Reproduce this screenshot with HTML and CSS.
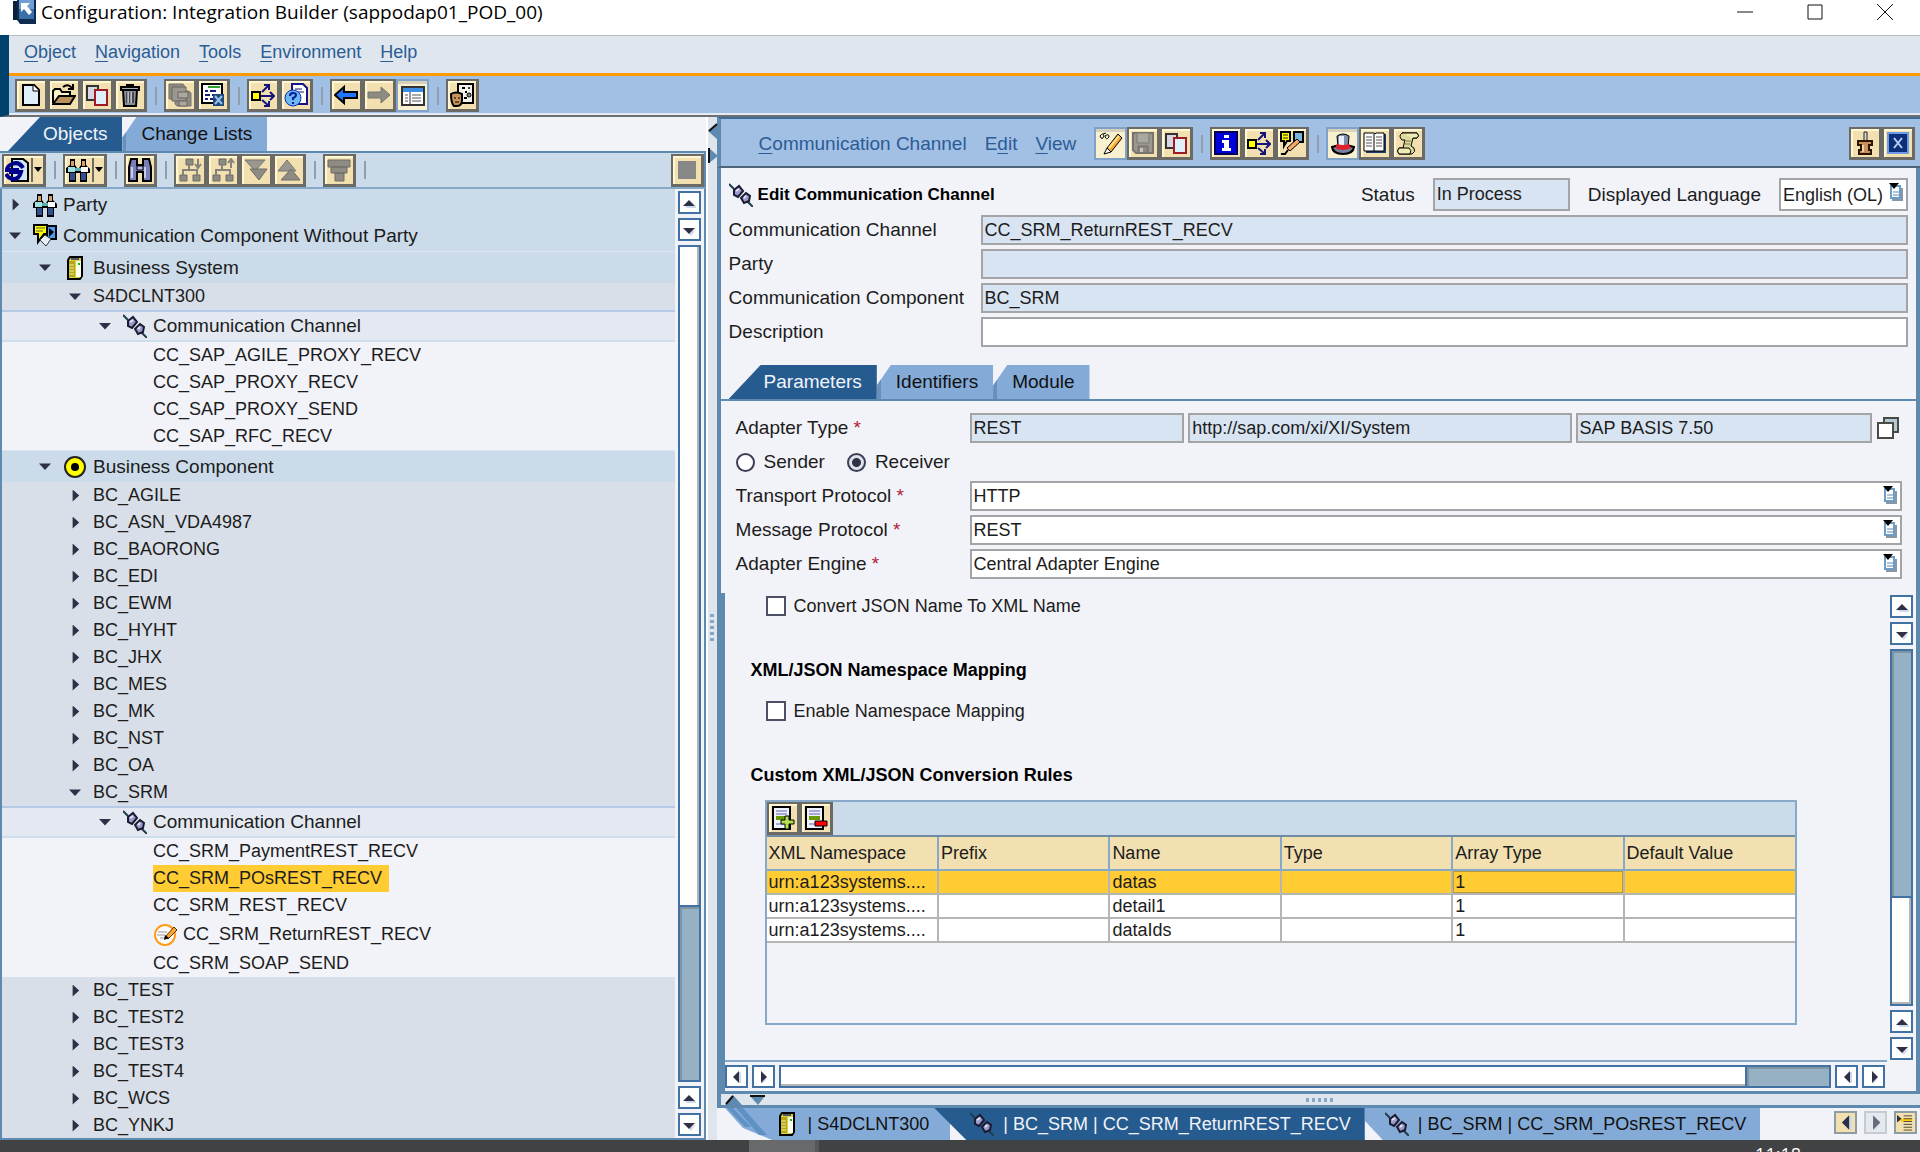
FILE: index.html
```
<!DOCTYPE html>
<html lang="en">
<head>
    <meta charset="UTF-8">
    <meta name="viewport" content="width=device-width, initial-scale=1.0">
    <title>Configuration: Integration Builder</title>
    <link rel="stylesheet" href="styles.css">
</head>
<body>
    <!-- shared icons -->
    <svg class="sprite" aria-hidden="true">
        <symbol id="i-logo" viewBox="0 0 24 24"><path d="M1 1h17v19H1z" fill="#0a2038"/><path d="M5 0h19v24H8l-3-4z" fill="#0d2c50"/><path d="M7 0h15v19H7z" fill="#6f9fd2"/><path d="M7 9h15v10H7z" fill="#3c6fa8"/><path d="M9 3h9l-3 3 5 6-3 3-5-6-3 3z" fill="#fff"/></symbol>
        <symbol id="i-new" viewBox="0 0 24 24"><path d="M4 2h11l5 5v15H4z" fill="#dff0fa" stroke="#000" stroke-width="2"/><path d="M14 2v6h6" fill="#fff" stroke="#000"/></symbol>
        <symbol id="i-open" viewBox="0 0 24 24"><path d="M1 20V8l2-2h5l2 3h8v4" fill="#fbf2c9" stroke="#000" stroke-width="2"/><path d="M1 21l6-8h16l-5 8z" fill="#b8925a" stroke="#000" stroke-width="2"/><path d="M11 4q5-4 9 1M21 1v5h-5" fill="none" stroke="#000" stroke-width="2"/></symbol>
        <symbol id="i-copy" viewBox="0 0 24 24"><path d="M2 3h11v14H2z" fill="#d8d6e2" stroke="#333" stroke-width="2"/><path d="M10 7h12v15H10z" fill="#dff0fa" stroke="#a01c24" stroke-width="2"/></symbol>
        <symbol id="i-trash" viewBox="0 0 24 24"><path d="M5 7h14l-1 16H6z" fill="#8b8f99" stroke="#000" stroke-width="2"/><path d="M3 4h18v3H3zM9 2h6v2H9z" fill="#a8acb6" stroke="#000" stroke-width="2"/><path d="M9 9v11M12 9v11M15 9v11" stroke="#000"/><path d="M10 9v11M13 9v11" stroke="#e9ebf0"/></symbol>
        <symbol id="i-saveall" viewBox="0 0 24 24"><path d="M1 1h14l2 3v12H1zM7 8h14l2 2v13H9l-2-2z" fill="#8d8b84" stroke="#77756f"/><path d="M4 4h14v14H4z" fill="#9a9890" stroke="#66645f"/><path d="M10 9h10v6H10zM11 18h8v5h-8z" fill="#aaa89f" stroke="#66645f"/></symbol>
        <symbol id="i-save" viewBox="0 0 24 24"><path d="M2 2h20v20H5l-3-3z" fill="#9a9890" stroke="#77756f" stroke-width="2"/><path d="M6 2h12v10H6z" fill="#a9a79f" stroke="#7b7972"/><path d="M7 15h10v7H7z" fill="#8a8880" stroke="#6f6d67"/><path d="M9 17h3v4H9z" fill="#c9c6b8"/></symbol>
        <symbol id="i-sheet" viewBox="0 0 24 24"><path d="M1 1h20v19H1z" fill="#fff" stroke="#000" stroke-width="2"/><path d="M7 4h12" stroke="#2fa12f" stroke-width="2"/><path d="M4 8h3M9 8h6M4 12h5M11 12h4M4 16h3M9 16h3" stroke="#1a1a80" stroke-width="2"/><path d="M12 11h11v12H12z" fill="#1c4a7c"/><path d="M14 13l7 8M21 13l-7 8" stroke="#9cc3ea" stroke-width="2"/></symbol>
        <symbol id="i-where" viewBox="0 0 24 24"><path d="M1 9h8v8H1z" fill="#ff0" stroke="#000" stroke-width="2"/><path d="M10 13h12M19 9l4 4-4 4M11 9l7-7M13 2h5v5M11 17l7 6M18 18v5h-5" fill="none" stroke="#14147a" stroke-width="2"/></symbol>
        <symbol id="i-help" viewBox="0 0 24 24"><path d="M8 1h11l4 4v16H8z" fill="#fff" stroke="#14148a" stroke-width="2"/><path d="M11 6h7M11 9h9" stroke="#14148a"/><circle cx="9" cy="15" r="8" fill="#6db8f2" stroke="#1430b4"/><path d="M6 13q0-3 3-3t3 2q0 2-3 3v2M9 19v2" fill="none" stroke="#001e9c" stroke-width="2"/></symbol>
        <symbol id="i-back" viewBox="0 0 24 24"><path d="M1 12l9-8v5h13v6H10v5z" fill="#1e78ff" stroke="#000" stroke-width="2"/></symbol>
        <symbol id="i-fwd" viewBox="0 0 24 24"><path d="M23 12l-9-8v5H1v6h13v5z" fill="#8d8b84" stroke="#77756f"/></symbol>
        <symbol id="i-layout" viewBox="0 0 24 24"><path d="M1 3h22v18H1z" fill="#fff" stroke="#333" stroke-width="2"/><path d="M2 4h20v4H2z" fill="#3a8ee6"/><path d="M9 8v13" stroke="#333"/><path d="M4 11h3M4 14h3M4 17h3M11 11h9M11 14h9M11 17h9" stroke="#555"/></symbol>
        <symbol id="i-user" viewBox="0 0 24 24"><path d="M8 1h15v19H8z" fill="#f4f2ea" stroke="#000" stroke-width="2"/><path d="M12 5h3M15 9h2M14 15h3" stroke="#000" stroke-width="2"/><circle cx="19" cy="5" r="1"/><circle cx="19" cy="12" r="2" fill="#888" stroke="#000"/><path d="M1 11q5-3 11 0v6q0 6-5 6H4q-3-3-3-12z" fill="#c7955c" stroke="#000" stroke-width="2"/><path d="M5 14v2M9 14v2M5 19h4" stroke="#000"/></symbol>
        <symbol id="i-refresh" viewBox="0 0 24 24"><path d="M7 1h11l5 4v18H7z" fill="#cfe6f6" stroke="#000" stroke-width="2"/><path d="M18 10Q14 3 7 6 2 8 2 12h12M4 14h12q-2 8-9 7-4-1-6-5" fill="none" stroke="#00008b" stroke-width="4"/></symbol>
        <symbol id="i-party" viewBox="0 0 24 24"><path d="M4 1h5v6l2 3h2l2-3V1h5v6l4 4v4h-3v9h-7v-9h-4v9H3v-9H0v-5l4-3z" fill="#000"/><path d="M5 3h3v5H5zM16 3h3v5h-3z" fill="#d9a066"/><path d="M2 9h7v5H2z" fill="#9fe2e2"/><path d="M15 9h7v5h-7z" fill="#fff"/><path d="M9 10h6v3H9z" fill="#5fb0b0"/><path d="M4 15h5v7H4zM15 15h5v7h-5z" fill="#32508c"/></symbol>
        <symbol id="i-find" viewBox="0 0 24 24"><path d="M3 1h6v6h6V1h6l2 8v14h-8v-9H9v9H1V9z" fill="#7b7fb8" stroke="#000" stroke-width="2"/><path d="M9 8h6v4H9z" fill="#b9bce6" stroke="#000"/><path d="M4 9v11M17 9v11" stroke="#c8caf0" stroke-width="2"/></symbol>
        <symbol id="i-treedown" viewBox="0 0 24 24"><path d="M8 1h7v6H8zM2 17h7v6H2zM15 17h7v6h-7z" fill="#8d8b84" stroke="#6f6d67"/><path d="M11 7v5M5 17v-5h14v5M20 1v8M17 6l3 4 3-4" fill="none" stroke="#85837c" stroke-width="2"/></symbol>
        <symbol id="i-treeup" viewBox="0 0 24 24"><path d="M8 1h7v6H8zM2 17h7v6H2zM15 17h7v6h-7z" fill="#8d8b84" stroke="#6f6d67"/><path d="M11 7v5M5 17v-5h14v5M20 10V2M17 5l3-4 3 4" fill="none" stroke="#85837c" stroke-width="2"/></symbol>
        <symbol id="i-alldown" viewBox="0 0 24 24"><path d="M1 2h20L11 13z" fill="#99978f" stroke="#77756f"/><path d="M6 11h17l-8 11z" fill="#8d8b84" stroke="#6f6d67"/></symbol>
        <symbol id="i-allup" viewBox="0 0 24 24"><path d="M1 13h18L10 2z" fill="#99978f" stroke="#77756f"/><path d="M4 22h19L14 11z" fill="#8d8b84" stroke="#6f6d67"/></symbol>
        <symbol id="i-filter" viewBox="0 0 24 24"><path d="M1 2h22v7H1zM4 9h16v6H4zM8 15h9v8H8z" fill="#8d8b84" stroke="#6f6d67"/></symbol>
        <symbol id="i-stop" viewBox="0 0 24 24"><path d="M3 3h18v18H3z" fill="#878787"/></symbol>
        <symbol id="i-comm" viewBox="0 0 24 24"><path d="M14 2h9v13h-9z" fill="#4c9cf0" stroke="#000" stroke-width="2"/><path d="M16 4l5 4-5 5z"/><path d="M1 1h13v9h-3l-6 8v-8H1z" fill="#ff0" stroke="#000" stroke-width="2"/><path d="M3 4h9M3 7h7" stroke="#555"/><path d="M7 16l5-5 6 4-5 7z" fill="#e6eef8" stroke="#333"/></symbol>
        <symbol id="i-server" viewBox="0 0 24 24"><path d="M5 4l2-3h12v19l-2 3H5z" fill="#d8cf4a" stroke="#000" stroke-width="2"/><path d="M13 5h5v16h-5z" fill="#fffff0"/><path d="M6 5h6v16H6z" fill="#b4a818"/><path d="M6 9h5M6 12h5M6 15h5M6 18h5" stroke="#f4ee90"/><path d="M8 3h8" stroke="#555" stroke-width="2"/><path d="M15 8h2" stroke="#0c0" stroke-width="2"/></symbol>
        <symbol id="i-channel" viewBox="0 0 24 24"><path d="M0 1l5 5M18 18l6 6" stroke="#1d3e4e" stroke-width="2"/><path d="M5 7l5-4 4 5-5 6-4-2z" fill="#9c9ccc" stroke="#1a1a30" stroke-width="2"/><path d="M12 15l5-5 4 3-1 5-5 2z" fill="#9c9ccc" stroke="#1a1a30" stroke-width="2"/><path d="M7 8l3-2M15 15l2-2" stroke="#e4e4fa" stroke-width="2"/></symbol>
        <symbol id="i-component" viewBox="0 0 24 24"><circle cx="12" cy="12" r="10" fill="#ff0" stroke="#222" stroke-width="2"/><circle cx="12" cy="12" r="4"/></symbol>
        <symbol id="i-edit" viewBox="0 0 24 24"><circle cx="12" cy="12" r="10" fill="#fff" stroke="#ff9b1a" stroke-width="2"/><path d="M5 9h9M4 12h8M7 15h6" stroke="#999"/><path d="M12 14l9-10 3 3-9 9z" fill="#f7a833" stroke="#5a3200"/><path d="M11 17l1-5 4 3z"/></symbol>
        <symbol id="i-toggle" viewBox="0 0 24 24"><path d="M1 4q3-4 4 0-2 5-4 0M6 4q4-3 4 1-3 4-4-1M4 2l3-1" fill="none" stroke="#000"/><path d="M8 16L19 2l4 4L12 20z" fill="#f7a833" stroke="#000"/><path d="M10 16l10-12" stroke="#ffe08a" stroke-width="2"/><path d="M5 22l3-6 4 4z" fill="#fff" stroke="#000"/></symbol>
        <symbol id="i-info" viewBox="0 0 24 24"><path d="M1 1h22v22H1z" fill="#0000d8" stroke="#00005a" stroke-width="2"/><path d="M10 4h5v3h-5zM8 9h7v8h2v3H8v-3h2v-5H8z" fill="#fff"/></symbol>
        <symbol id="i-change" viewBox="0 0 24 24"><path d="M14 1h9v10h-9z" fill="#7ab4d8" stroke="#000" stroke-width="2"/><path d="M1 1h9v9H7l-3 5v-5H1z" fill="#ff0" stroke="#000" stroke-width="2"/><path d="M3 4h5M3 7h5" stroke="#222"/><path d="M7 17l10-9 3 3-10 9z" fill="#f7a868" stroke="#000"/><path d="M1 23h4l3-4" fill="none" stroke="#000" stroke-width="2"/></symbol>
        <symbol id="i-hat" viewBox="0 0 24 24"><path d="M1 15q11-4 22 0-1 7-11 7T1 15z" fill="#7782a2" stroke="#000" stroke-width="2"/><path d="M6 4q6-4 12 0l-1 11H7z" fill="#7f8dae" stroke="#000"/><path d="M8 4h5v9H8z" fill="#e9effa"/><path d="M6 12q6 2 12 0l2 4q-8 4-16 0z" fill="#e0202c"/></symbol>
        <symbol id="i-book" viewBox="0 0 24 24"><path d="M3 3h20v19H3z" fill="#1e3c68"/><path d="M1 2h10l1 1 1-1h8v18H1z" fill="#fff" stroke="#000"/><path d="M11 3v17" stroke="#000"/><path d="M3 6h6M3 9h6M3 12h6M3 15h6M13 6h6M13 9h6M13 12h6M13 15h6" stroke="#555"/></symbol>
        <symbol id="i-scroll" viewBox="0 0 24 24"><path d="M6 2h15q3 3 0 5h-4l-2 8 3 2q2 4-2 6H3q-3-3 0-6h4l2-8H6q-4-4 0-7z" fill="#dedc9c" stroke="#000"/><path d="M6 2h15q3 3 0 5h-4M3 17h10q3 2 1 6H3q-3-3 0-6z" fill="#efedb4" stroke="#000"/><path d="M10 10h5M9 13h5" stroke="#77753a"/></symbol>
        <symbol id="i-pin" viewBox="0 0 24 24"><path d="M11 1h3v9h-3z" fill="#ddd" stroke="#222"/><path d="M5 10h14v4h-3v5h2v4H6v-4h2v-5H5z" fill="#c98f5c" stroke="#2c1500" stroke-width="2"/><path d="M10 14v7" stroke="#f3d0a6" stroke-width="2"/></symbol>
        <symbol id="i-close" viewBox="0 0 24 24"><path d="M1 1h22v22H1z" fill="#6f9ae6"/><path d="M3 3h18v18H3z" fill="#0b2f78"/><path d="M8 7l8 10M16 7L8 17" stroke="#b8cdf4" stroke-width="2"/></symbol>
        <symbol id="i-rowadd" viewBox="0 0 24 24"><path d="M2 1h17v22H2z" fill="#f0f2fb" stroke="#000" stroke-width="2"/><path d="M5 5h11M5 8h11M5 18h8" stroke="#a6a9dc" stroke-width="2"/><path d="M5 10h11v4H5z" fill="#6a9a00"/><path d="M14 10h4v4h5v4h-5v5h-4v-5h-4v-4h4z" fill="#b6dc50" stroke="#000"/></symbol>
        <symbol id="i-rowdel" viewBox="0 0 24 24"><path d="M2 1h17v22H2z" fill="#f0f2fb" stroke="#000" stroke-width="2"/><path d="M5 5h11M5 8h11M5 18h8" stroke="#a6a9dc" stroke-width="2"/><path d="M5 10h11v4H5z" fill="#6a9a00"/><path d="M11 15h12v5H11z" fill="#f00" stroke="#000"/></symbol>
        <symbol id="i-list" viewBox="0 0 14 18"><path d="M2 3h9v12H2z" fill="#fff" stroke="#6f9cc4" stroke-width="2"/><path d="M13 5v12H3" fill="none" stroke="#8797a6" stroke-width="2"/><path d="M4 9h6M4 12h6" stroke="#5b8ab4"/><path d="M0 0h10L5 6z"/></symbol>
        <symbol id="i-windows" viewBox="0 0 24 24"><path d="M8 2h14v14H8z" fill="#b4cad6" stroke="#4a4a44" stroke-width="2"/><path d="M2 7h15v15H2z" fill="#fff" stroke="#4a4a44" stroke-width="2"/></symbol>
        <symbol id="i-up" viewBox="0 0 14 14"><path d="M3 10h11v2H5z" fill="#c9d9ee"/><path d="M1 10l6-6 6 6z" fill="#2e3048"/></symbol>
        <symbol id="i-down" viewBox="0 0 14 14"><path d="M14 6l-5 7-2-2z" fill="#c9d9ee"/><path d="M1 5h12l-6 6z" fill="#2e3048"/></symbol>
        <symbol id="i-left" viewBox="0 0 14 14"><path d="M10 2h2v11h-2z" fill="#c9d9ee"/><path d="M10 1v12L4 7z" fill="#2e3048"/></symbol>
        <symbol id="i-right" viewBox="0 0 14 14"><path d="M12 8l-6 6v-2z" fill="#c9d9ee"/><path d="M5 1v12l6-6z" fill="#2e3048"/></symbol>
        <symbol id="i-tablist" viewBox="0 0 18 18"><path d="M0 1v8l5-4z" fill="#2e3048"/><path d="M4 5h12v3H4z" fill="#ffcc00"/><path d="M7 2h9M7 5h9M7 8h9M7 11h9M7 14h9M7 17h9" stroke="#4a4434"/></symbol>
    </svg>

    <div class="window">
        <header class="titlebar">
            <svg class="logo"><use href="#i-logo"/></svg>
            <h1>Configuration: Integration Builder (sappodap01_POD_00)</h1>
            <div class="window-buttons">
                <button aria-label="Minimize"><svg viewBox="0 0 18 18"><path d="M1 9h16"/></svg></button>
                <button aria-label="Maximize"><svg viewBox="0 0 18 18"><path d="M2 2h14v14H2z"/></svg></button>
                <button aria-label="Close"><svg viewBox="0 0 18 18"><path d="M1 1l16 16M17 1L1 17"/></svg></button>
            </div>
        </header>

        <div class="topbars">
            <nav class="menubar">
                <a href="#"><u>O</u>bject</a>
                <a href="#"><u>N</u>avigation</a>
                <a href="#"><u>T</u>ools</a>
                <a href="#"><u>E</u>nvironment</a>
                <a href="#"><u>H</u>elp</a>
            </nav>
            <div class="toolbar main-toolbar">
                <div class="group">
                    <button class="tool" aria-label="New"><svg><use href="#i-new"/></svg></button>
                    <button class="tool" aria-label="Open"><svg><use href="#i-open"/></svg></button>
                    <button class="tool" aria-label="Copy"><svg><use href="#i-copy"/></svg></button>
                    <button class="tool" aria-label="Delete"><svg><use href="#i-trash"/></svg></button>
                </div>
                <i class="sep"></i>
                <div class="group">
                    <button class="tool" aria-label="Save all"><svg><use href="#i-saveall"/></svg></button>
                    <button class="tool" aria-label="Close all"><svg><use href="#i-sheet"/></svg></button>
                </div>
                <i class="sep"></i>
                <div class="group">
                    <button class="tool" aria-label="Where used"><svg><use href="#i-where"/></svg></button>
                    <button class="tool" aria-label="Help"><svg><use href="#i-help"/></svg></button>
                </div>
                <i class="sep"></i>
                <div class="group">
                    <button class="tool" aria-label="Back"><svg><use href="#i-back"/></svg></button>
                    <button class="tool" aria-label="Forward"><svg><use href="#i-fwd"/></svg></button>
                    <button class="tool pressed" aria-label="Navigation area"><svg><use href="#i-layout"/></svg></button>
                </div>
                <i class="sep"></i>
                <div class="group">
                    <button class="tool" aria-label="User roles"><svg><use href="#i-user"/></svg></button>
                </div>
            </div>
        </div>

        <main class="workspace">
            <section class="navigator">
                <div class="tabs nav-tabs">
                    <button class="tab active">Objects</button>
                    <button class="tab">Change Lists</button>
                </div>
                <div class="toolbar nav-toolbar">
                    <div class="group">
                        <button class="tool wide" aria-label="Refresh"><svg><use href="#i-refresh"/></svg><b class="caret"></b></button>
                    </div>
                    <i class="sep"></i>
                    <div class="group">
                        <button class="tool wide" aria-label="Party"><svg><use href="#i-party"/></svg><b class="caret"></b></button>
                    </div>
                    <i class="sep"></i>
                    <div class="group">
                        <button class="tool" aria-label="Find"><svg><use href="#i-find"/></svg></button>
                    </div>
                    <i class="sep"></i>
                    <div class="group">
                        <button class="tool" aria-label="Expand node"><svg><use href="#i-treedown"/></svg></button>
                        <button class="tool" aria-label="Collapse node"><svg><use href="#i-treeup"/></svg></button>
                        <button class="tool" aria-label="Expand all"><svg><use href="#i-alldown"/></svg></button>
                        <button class="tool" aria-label="Collapse all"><svg><use href="#i-allup"/></svg></button>
                    </div>
                    <i class="sep"></i>
                    <div class="group">
                        <button class="tool" aria-label="Filter"><svg><use href="#i-filter"/></svg></button>
                    </div>
                    <i class="sep"></i>
                    <button class="tool push" aria-label="Stop"><svg><use href="#i-stop"/></svg></button>
                </div>
                <div class="tree-area">
                    <ul class="tree">
                        <li class="l0 has-icon"><button class="closed" aria-label="Expand"></button><svg><use href="#i-party"/></svg><span>Party</span></li>
                        <li class="l0 has-icon"><button class="opened" aria-label="Collapse"></button><svg><use href="#i-comm"/></svg><span>Communication Component Without Party</span></li>
                        <li class="l1 has-icon"><button class="opened" aria-label="Collapse"></button><svg><use href="#i-server"/></svg><span>Business System</span></li>
                        <li class="l2"><button class="opened" aria-label="Collapse"></button><span>S4DCLNT300</span></li>
                        <li class="l3 has-icon"><button class="opened" aria-label="Collapse"></button><svg><use href="#i-channel"/></svg><span>Communication Channel</span></li>
                        <li class="l4"><span>CC_SAP_AGILE_PROXY_RECV</span></li>
                        <li class="l4"><span>CC_SAP_PROXY_RECV</span></li>
                        <li class="l4"><span>CC_SAP_PROXY_SEND</span></li>
                        <li class="l4"><span>CC_SAP_RFC_RECV</span></li>
                        <li class="l1 has-icon"><button class="opened" aria-label="Collapse"></button><svg><use href="#i-component"/></svg><span>Business Component</span></li>
                        <li class="l2"><button class="closed" aria-label="Expand"></button><span>BC_AGILE</span></li>
                        <li class="l2"><button class="closed" aria-label="Expand"></button><span>BC_ASN_VDA4987</span></li>
                        <li class="l2"><button class="closed" aria-label="Expand"></button><span>BC_BAORONG</span></li>
                        <li class="l2"><button class="closed" aria-label="Expand"></button><span>BC_EDI</span></li>
                        <li class="l2"><button class="closed" aria-label="Expand"></button><span>BC_EWM</span></li>
                        <li class="l2"><button class="closed" aria-label="Expand"></button><span>BC_HYHT</span></li>
                        <li class="l2"><button class="closed" aria-label="Expand"></button><span>BC_JHX</span></li>
                        <li class="l2"><button class="closed" aria-label="Expand"></button><span>BC_MES</span></li>
                        <li class="l2"><button class="closed" aria-label="Expand"></button><span>BC_MK</span></li>
                        <li class="l2"><button class="closed" aria-label="Expand"></button><span>BC_NST</span></li>
                        <li class="l2"><button class="closed" aria-label="Expand"></button><span>BC_OA</span></li>
                        <li class="l2"><button class="opened" aria-label="Collapse"></button><span>BC_SRM</span></li>
                        <li class="l3 has-icon"><button class="opened" aria-label="Collapse"></button><svg><use href="#i-channel"/></svg><span>Communication Channel</span></li>
                        <li class="l4"><span>CC_SRM_PaymentREST_RECV</span></li>
                        <li class="l4"><span class="selected">CC_SRM_POsREST_RECV</span></li>
                        <li class="l4"><span>CC_SRM_REST_RECV</span></li>
                        <li class="l4 editing"><svg><use href="#i-edit"/></svg><span>CC_SRM_ReturnREST_RECV</span></li>
                        <li class="l4"><span>CC_SRM_SOAP_SEND</span></li>
                        <li class="l2"><button class="closed" aria-label="Expand"></button><span>BC_TEST</span></li>
                        <li class="l2"><button class="closed" aria-label="Expand"></button><span>BC_TEST2</span></li>
                        <li class="l2"><button class="closed" aria-label="Expand"></button><span>BC_TEST3</span></li>
                        <li class="l2"><button class="closed" aria-label="Expand"></button><span>BC_TEST4</span></li>
                        <li class="l2"><button class="closed" aria-label="Expand"></button><span>BC_WCS</span></li>
                        <li class="l2"><button class="closed" aria-label="Expand"></button><span>BC_YNKJ</span></li>
                    </ul>
                    <div class="scroll vertical">
                        <button aria-label="Up"><svg><use href="#i-up"/></svg></button>
                        <button aria-label="Down"><svg><use href="#i-down"/></svg></button>
                        <div class="track at-end"><div class="thumb tree-thumb"></div></div>
                        <button aria-label="Up"><svg><use href="#i-up"/></svg></button>
                        <button aria-label="Down"><svg><use href="#i-down"/></svg></button>
                    </div>
                </div>
            </section>

            <div class="splitter">
                <svg class="split-arrows" viewBox="0 0 11 42"><path d="M11 0v17L1 8z" fill="#5f8ab0"/><path d="M10 1L2 8" stroke="#111" stroke-width="2"/><path d="M2 25v15l9-7z" fill="#5f8ab0"/><path d="M2 25v15" stroke="#111" stroke-width="2"/></svg>
                <div class="grip"></div>
            </div>

            <section class="editor">
                <div class="toolbar editor-bar">
                    <nav class="editor-menu">
                        <a href="#"><u>C</u>ommunication Channel</a>
                        <a href="#">E<u>d</u>it</a>
                        <a href="#"><u>V</u>iew</a>
                    </nav>
                    <div class="group">
                        <button class="tool pressed" aria-label="Display or edit"><svg><use href="#i-toggle"/></svg></button>
                        <button class="tool" aria-label="Save"><svg><use href="#i-save"/></svg></button>
                        <button class="tool" aria-label="Copy"><svg><use href="#i-copy"/></svg></button>
                    </div>
                    <i class="sep"></i>
                    <div class="group">
                        <button class="tool" aria-label="Information"><svg><use href="#i-info"/></svg></button>
                        <button class="tool" aria-label="Where used"><svg><use href="#i-where"/></svg></button>
                        <button class="tool" aria-label="Change"><svg><use href="#i-change"/></svg></button>
                    </div>
                    <i class="sep"></i>
                    <div class="group">
                        <button class="tool pressed" aria-label="Header"><svg><use href="#i-hat"/></svg></button>
                        <button class="tool" aria-label="Documentation"><svg><use href="#i-book"/></svg></button>
                        <button class="tool" aria-label="History"><svg><use href="#i-scroll"/></svg></button>
                    </div>
                    <div class="group push">
                        <button class="tool" aria-label="Detach"><svg><use href="#i-pin"/></svg></button>
                        <button class="tool" aria-label="Close"><svg><use href="#i-close"/></svg></button>
                    </div>
                </div>

                <div class="editor-body">
                    <div class="object-head">
                        <div class="title-row">
                            <svg class="title-icon"><use href="#i-channel"/></svg>
                            <h2>Edit Communication Channel</h2>
                            <label for="status">Status</label>
                            <input id="status" class="status" value="In Process" readonly>
                            <label for="language">Displayed Language</label>
                            <div class="combo language">
                                <select id="language"><option>English (OL)</option></select>
                                <svg><use href="#i-list"/></svg>
                            </div>
                        </div>
                        <div class="head-field"><label for="channel">Communication Channel</label><input id="channel" value="CC_SRM_ReturnREST_RECV" readonly></div>
                        <div class="head-field"><label for="party">Party</label><input id="party" readonly></div>
                        <div class="head-field"><label for="component">Communication Component</label><input id="component" value="BC_SRM" readonly></div>
                        <div class="head-field"><label for="description">Description</label><input id="description"></div>
                    </div>

                    <div class="tabs editor-tabs">
                        <button class="tab active">Parameters</button>
                        <button class="tab">Identifiers</button>
                        <button class="tab">Module</button>
                    </div>

                    <div class="parameters">
                        <div class="param">
                            <label for="adapter">Adapter Type <em>*</em></label>
                            <div class="adapter">
                                <input id="adapter" value="REST" readonly>
                                <input aria-label="Adapter namespace" value="http://sap.com/xi/XI/System" readonly>
                                <input aria-label="Software component" value="SAP BASIS 7.50" readonly>
                                <button class="pick" aria-label="Select adapter"><svg><use href="#i-windows"/></svg></button>
                            </div>
                        </div>
                        <div class="direction">
                            <label><input type="radio" name="direction">Sender</label>
                            <label><input type="radio" name="direction" checked>Receiver</label>
                        </div>
                        <div class="param">
                            <label for="transport">Transport Protocol <em>*</em></label>
                            <div class="combo"><select id="transport"><option>HTTP</option></select><svg><use href="#i-list"/></svg></div>
                        </div>
                        <div class="param">
                            <label for="message">Message Protocol <em>*</em></label>
                            <div class="combo"><select id="message"><option>REST</option></select><svg><use href="#i-list"/></svg></div>
                        </div>
                        <div class="param">
                            <label for="engine">Adapter Engine <em>*</em></label>
                            <div class="combo"><select id="engine"><option>Central Adapter Engine</option></select><svg><use href="#i-list"/></svg></div>
                        </div>
                    </div>

                    <div class="details">
                        <div class="details-row">
                            <div class="details-content">
                                <label class="check"><input type="checkbox">Convert JSON Name To XML Name</label>
                                <h3>XML/JSON Namespace Mapping</h3>
                                <label class="check"><input type="checkbox">Enable Namespace Mapping</label>
                                <h3>Custom XML/JSON Conversion Rules</h3>
                                <div class="rules">
                                    <div class="rules-bar">
                                        <button class="tool" aria-label="Add row"><svg><use href="#i-rowadd"/></svg></button>
                                        <button class="tool" aria-label="Delete row"><svg><use href="#i-rowdel"/></svg></button>
                                    </div>
                                    <table>
                                        <thead>
                                            <tr><th>XML Namespace</th><th>Prefix</th><th>Name</th><th>Type</th><th>Array Type</th><th>Default Value</th></tr>
                                        </thead>
                                        <tbody>
                                            <tr class="current"><td>urn:a123systems....</td><td></td><td>datas</td><td></td><td class="focus">1</td><td></td></tr>
                                            <tr><td>urn:a123systems....</td><td></td><td>detail1</td><td></td><td>1</td><td></td></tr>
                                            <tr><td>urn:a123systems....</td><td></td><td>dataIds</td><td></td><td>1</td><td></td></tr>
                                        </tbody>
                                    </table>
                                </div>
                            </div>
                            <div class="scroll vertical">
                                <button aria-label="Up"><svg><use href="#i-up"/></svg></button>
                                <button aria-label="Down"><svg><use href="#i-down"/></svg></button>
                                <div class="track"><div class="thumb details-thumb"></div></div>
                                <button aria-label="Up"><svg><use href="#i-up"/></svg></button>
                                <button aria-label="Down"><svg><use href="#i-down"/></svg></button>
                            </div>
                        </div>
                        <div class="scroll horizontal">
                            <button aria-label="Left"><svg><use href="#i-left"/></svg></button>
                            <button aria-label="Right"><svg><use href="#i-right"/></svg></button>
                            <div class="track at-end"><div class="thumb across-thumb"></div></div>
                            <button aria-label="Left"><svg><use href="#i-left"/></svg></button>
                            <button aria-label="Right"><svg><use href="#i-right"/></svg></button>
                        </div>
                    </div>
                </div>

                <div class="splitter-bottom">
                    <svg viewBox="0 0 42 11"><path d="M0 11L8 1l9 10z" fill="#5f8ab0"/><path d="M1 10l7-8" stroke="#111" stroke-width="2"/><path d="M25 2h15l-7 9z" fill="#5f8ab0"/><path d="M25 2h15" stroke="#111" stroke-width="2"/></svg>
                    <div class="grip across"></div>
                </div>

                <div class="open-objects">
                    <svg class="folds" viewBox="0 0 50 32"><path d="M2 0h48v32h-1L20 20z" fill="#84abd8"/><path d="M4 0h6l18 19h-6zM13 0h7l24 27h-8z" fill="#5f92c4"/></svg>
                    <button class="object-tab first"><svg><use href="#i-server"/></svg>| S4DCLNT300</button>
                    <button class="object-tab active"><svg><use href="#i-channel"/></svg>| BC_SRM | CC_SRM_ReturnREST_RECV</button>
                    <button class="object-tab"><svg><use href="#i-channel"/></svg>| BC_SRM | CC_SRM_POsREST_RECV</button>
                    <div class="tab-nav">
                        <button aria-label="Previous tab"><svg><use href="#i-left"/></svg></button>
                        <button aria-label="Next tab" disabled><svg><use href="#i-right"/></svg></button>
                        <button aria-label="All tabs"><svg><use href="#i-tablist"/></svg></button>
                    </div>
                </div>
            </section>
        </main>

        <footer class="taskbar">
            <div class="task"></div>
            <time>11:18</time>
        </footer>
    </div>
</body>
</html>
```
FILE: styles.css
```
* {
    margin: 0;
    padding: 0;
    box-sizing: border-box;
}
body {
    font-family: "Liberation Sans", Arial, sans-serif;
    font-size: 19px;
    color: #1c1c1c;
    background: #f2f3f8;
}
button, input, select {
    font: inherit;
    color: inherit;
    border: none;
    border-radius: 0;
    background: none;
}
svg {
    display: block;
    flex: none;
    width: 24px;
    height: 24px;
}
.sprite {
    display: none;
}
.window {
    height: 100vh;
    display: flex;
    flex-direction: column;
    overflow: hidden;
}

/* title bar */
.titlebar {
    height: 35px;
    flex: none;
    display: flex;
    align-items: flex-start;
    background: #fff;
    padding-left: 12px;
}
.logo {
    margin-right: 5px;
}
.titlebar h1 {
    font: 19px/24px "Open Sans", sans-serif;
    color: #000;
}
.window-buttons {
    display: flex;
    margin-left: auto;
}
.window-buttons button {
    width: 70px;
    height: 24px;
    display: grid;
    place-items: center;
}
.window-buttons svg {
    width: 18px;
    height: 18px;
    fill: none;
    stroke: #111;
}

/* menu and toolbars */
.topbars {
    flex: none;
    border-left: 9px solid #00426b;
    border-bottom: 2px solid #6d6f72;
}
.menubar {
    height: 38px;
    display: flex;
    align-items: center;
    gap: 19px;
    padding: 0 0 4px 15px;
    font-size: 18px;
    background: #dfe6ed;
    border-top: 1px solid #b9bec4;
}
.menubar a, .editor-menu a {
    color: #2a5c96;
    text-decoration: none;
}
.menubar u, .editor-menu u {
    text-underline-offset: 3px;
}
.toolbar {
    display: flex;
    align-items: center;
}
.main-toolbar {
    height: 42px;
    padding: 2px 0 0 6px;
    background: #a2bfe4;
    border-top: 3px solid #ff9b00;
    border-bottom: 2px solid #e4ebf4;
}
.group {
    display: flex;
}
.sep {
    width: 2px;
    height: 18px;
    margin: 0 7px 0 8px;
    background: #8f9dae;
}
.tool {
    width: 33px;
    height: 33px;
    flex: none;
    display: flex;
    align-items: center;
    justify-content: center;
    background: #f2e0b0;
    border: 2px solid #6b6a64;
    border-right-width: 3px;
    border-bottom-width: 3px;
    box-shadow: inset 2px 2px 0 #fff6d2;
}
.tool.pressed {
    background: #f9f0cf;
    border: 2px solid #7ea2c8;
    box-shadow: inset 0 3px 0 #d9d0bb;
}
.tool.wide {
    width: 44px;
    gap: 2px;
}
.caret {
    width: 12px;
    height: 24px;
    display: grid;
    place-items: center;
    border-left: 2px solid #6b6a64;
}
.caret::before {
    content: "";
    border: 4px solid transparent;
    border-top: 5px solid #000;
    border-bottom: 0;
}
.push {
    margin-left: auto;
}

.workspace {
    flex: 1;
    min-height: 0;
    display: flex;
}

/* tabs with a slanted left edge */
.tabs {
    display: flex;
    height: 34px;
}
.tab {
    height: 34px;
    padding: 0 15px 0 19px;
    background: #84abd8;
    color: #111;
    clip-path: polygon(0 60%, 14px 0, 100% 0, 100% 100%, 0 100%);
    box-shadow: inset 4px 0 0 #6890bb;
}
.tab.active {
    padding-left: 35px;
    background: #255b8f;
    color: #f2f3f8;
    clip-path: polygon(0 100%, 32px 0, 100% 0, 100% 100%);
    box-shadow: none;
}

/* object navigator */
.navigator {
    width: 36.75%;
    flex: none;
    display: flex;
    flex-direction: column;
}
.nav-tabs {
    padding-left: 8px;
}
.nav-toolbar {
    height: 38px;
    flex: none;
    padding-left: 2px;
    background: #cbdbe9;
    border: 2px solid #5f8ab0;
    border-left: 0;
    border-bottom-color: #87a9c9;
}
.tree-area {
    flex: 1;
    min-height: 0;
    display: flex;
    border: 2px solid #5f8ab0;
    border-top: 0;
}
.tree {
    flex: 1;
    min-width: 0;
    overflow: hidden;
    list-style: none;
}
.tree li {
    height: 27px;
    display: flex;
    align-items: center;
    white-space: nowrap;
}
.tree li.has-icon {
    height: 32px;
}
.tree li.l0 {
    height: 31px;
}
.tree li.editing {
    height: 31px;
}
.tree svg {
    margin-right: 6px;
}
.tree button {
    width: 12px;
    height: 12px;
    flex: none;
    margin-right: 12px;
    background: #2e3048;
}
.tree .opened {
    clip-path: polygon(0 25%, 100% 25%, 50% 80%);
}
.tree .closed {
    clip-path: polygon(30% 0, 85% 50%, 30% 100%);
}
.l0, .l1 {
    background: #cbdbe9;
}
.tree .l0 {
    padding-left: 7px;
}
.tree .l1 {
    padding-left: 37px;
    border-top: 1px solid #d9e5f0;
}
.tree .l2 {
    padding-left: 67px;
    background: #d9dfe8;
    font-size: 18px;
}
.tree .l3 {
    padding-left: 97px;
    background: #e4e9f1;
    border-top: 2px solid #b4cae6;
    border-bottom: 2px solid #cfdeea;
}
.tree .l4 {
    padding-left: 151px;
    font-size: 18px;
}
.selected {
    background: #ffcc33;
    line-height: 27px;
    padding-right: 7px;
}

/* scrollbars */
.scroll {
    display: flex;
    gap: 4px;
    flex: none;
}
.scroll button {
    width: 23px;
    height: 23px;
    display: grid;
    place-items: center;
    flex: none;
}
.scroll button, .track {
    background: #fff;
    border: 2px solid #4272a3;
}
.scroll button svg {
    width: 14px;
    height: 14px;
}
.vertical {
    flex-direction: column;
    padding: 2px 3px;
}
.track {
    flex: 1;
    display: flex;
    box-shadow: inset -2px -2px 0 #b5b5b5;
}
.vertical .track {
    flex-direction: column;
    width: 23px;
}
.at-end {
    justify-content: flex-end;
}
.thumb {
    background: #96b1c4;
    box-shadow: inset 2px 2px 0 #7f95a4;
}
.tree-thumb {
    height: 21%;
    border-top: 2px solid #4272a3;
}
.details-thumb {
    height: 70%;
    border-bottom: 2px solid #4272a3;
}
.across-thumb {
    width: 8%;
    border-left: 2px solid #4272a3;
}

/* splitters */
.splitter {
    width: 11px;
    flex: none;
    position: relative;
    background: #dfe5ec;
    border-left: 2px solid #fff;
    display: flex;
    align-items: center;
}
.split-arrows {
    position: absolute;
    left: -1px;
    top: 6px;
    width: 11px;
    height: 42px;
}
.grip {
    width: 4px;
    height: 30px;
    margin: 0 auto;
    background: repeating-linear-gradient(#87a5c4 0 3px, transparent 3px 6px);
}
.grip.across {
    width: 28px;
    height: 4px;
    background: repeating-linear-gradient(90deg, #87a5c4 0 3px, transparent 3px 6px);
}

/* editor */
.editor {
    flex: 1;
    min-width: 0;
    display: flex;
    flex-direction: column;
}
.editor-bar {
    height: 51px;
    flex: none;
    padding: 2px 5px 0 38px;
    background: #a2bfe4;
    border-left: 4px solid #5f8ab0;
    border-top: 2px solid #3e6c9c;
    border-bottom: 2px solid #4f6474;
}
.editor-menu {
    display: flex;
    gap: 18px;
    margin-right: 18px;
}
.editor-body {
    flex: 1;
    min-height: 0;
    display: flex;
    flex-direction: column;
    border: 4px solid #5f8ab0;
    border-top: 0;
    border-bottom-width: 3px;
}
.object-head {
    padding: 10px 8px 18px;
    display: flex;
    flex-direction: column;
    gap: 4px;
}
.title-row {
    height: 33px;
    display: flex;
    align-items: center;
}
.title-row h2 {
    font-size: 17px;
    color: #000;
    margin: 0 auto 0 5px;
}
.title-row label {
    margin: 0 18px;
}
input:not([type]), select {
    height: 30px;
    width: 100%;
    min-width: 0;
    padding: 0 2px;
    font-size: 18px;
    background: #fff;
    border: 2px solid #a2a4a6;
    appearance: none;
}
input:read-only:not([type]) {
    background: #d8e4f2;
}
.title-row .status {
    width: 137px;
    height: 33px;
}
.combo {
    flex: 1;
    display: flex;
    position: relative;
}
.combo svg {
    position: absolute;
    right: 5px;
    top: 5px;
    width: 14px;
    height: 18px;
}
.combo.language {
    flex: none;
    width: 129px;
}
.language select {
    height: 33px;
}
.head-field, .param {
    display: flex;
    align-items: center;
}
.head-field label {
    width: 252px;
    flex: none;
}
.editor-tabs {
    flex: none;
    padding-left: 8px;
}
.parameters {
    padding: 12px 14px 14px 15px;
    border-top: 2px solid #5f8ab0;
    display: flex;
    flex-direction: column;
    gap: 4px;
}
.param label {
    width: 234px;
    flex: none;
}
.param em {
    color: #b01838;
    font-style: normal;
}
.adapter {
    flex: 1;
    display: grid;
    grid-template-columns: 215fr 384fr 297fr 26px;
    gap: 4px;
    align-items: center;
}
.direction {
    height: 30px;
    display: flex;
    align-items: center;
    gap: 22px;
}
.direction label, .check {
    display: flex;
    align-items: center;
    gap: 9px;
}
input[type="radio"] {
    width: 19px;
    height: 19px;
    appearance: none;
    border: 2px solid #3c3e58;
    border-radius: 50%;
    background: #fff;
}
input[type="radio"]:checked {
    background: radial-gradient(#2e3048 0 4px, #dfe2ea 5px);
}
input[type="checkbox"] {
    width: 20px;
    height: 20px;
    appearance: none;
    background: #fff;
    border: 2px solid #4c4f66;
}

/* scrolled details */
.details {
    flex: 1;
    min-height: 0;
    display: flex;
    flex-direction: column;
    border-left: 4px solid #5f8ab0;
}
.details-row {
    flex: 1;
    min-height: 0;
    display: flex;
}
.details-content {
    flex: 1;
    min-width: 0;
    padding: 0 90px 0 26px;
    overflow: hidden;
    border-bottom: 2px solid #87a9c9;
}
.check {
    height: 26px;
    margin-left: 15px;
    gap: 8px;
    font-size: 18px;
}
.details h3 {
    font-size: 18px;
    line-height: 26px;
    color: #000;
    margin: 38px 0 12px;
}
h3 + .check {
    margin-top: 15px;
}
.rules {
    height: 225px;
    margin-left: 14px;
    border: 2px solid #87a9c9;
}
.rules-bar {
    display: flex;
    background: #cbdbe9;
    border-bottom: 2px solid #6f8aa2;
}
.rules table {
    width: 100%;
    table-layout: fixed;
    border-collapse: collapse;
    font-size: 18px;
}
.rules th {
    height: 33px;
    padding: 0 2px;
    font-weight: normal;
    text-align: left;
    background: #f2e0b0;
    border: 2px solid #87a9c9;
    border-top: 0;
}
.rules td {
    height: 24px;
    padding: 0 2px;
    line-height: 20px;
    background: #fff;
    border: 2px solid #b5b5b5;
}
.rules th:first-child, .rules td:first-child {
    border-left: 0;
}
.rules th:last-child, .rules td:last-child {
    border-right: 0;
}
.rules .current td {
    background: #ffcc33;
    border-top-color: #87a9c9;
}
.rules .current .focus {
    box-shadow: inset 0 0 0 1px #b99a3c;
}
.horizontal {
    padding: 3px 31px 3px 0;
}

/* open object tabs */
.splitter-bottom {
    height: 14px;
    flex: none;
    position: relative;
    display: flex;
    align-items: center;
    background: #dfe5ec;
    border-left: 4px solid #5f8ab0;
    border-bottom: 3px solid #5f8ab0;
}
.splitter-bottom svg {
    position: absolute;
    left: 4px;
    top: 0;
    width: 42px;
    height: 11px;
}
.open-objects {
    height: 32px;
    flex: none;
    display: flex;
    padding-left: 6px;
}
.folds {
    width: 50px;
    height: 32px;
}
.object-tab {
    display: flex;
    align-items: center;
    gap: 9px;
    padding: 0 14px 0 20px;
    font-size: 18px;
    white-space: nowrap;
    color: #111;
    background: #84abd8;
    clip-path: polygon(0 0, 100% 0, 100% 100%, 18px 100%, 0 40%);
}
.object-tab.first {
    padding: 0 21px 0 2px;
    clip-path: none;
}
/* the current tab covers the end of the one before it */
.object-tab.active {
    margin-left: -16px;
    padding-left: 36px;
    color: #f2f3f8;
    background: #255b8f;
    clip-path: polygon(0 0, 100% 0, 100% 100%, 32px 100%);
}
.tab-nav {
    display: flex;
    gap: 7px;
    margin: 3px 3px 0 auto;
}
.tab-nav button {
    width: 23px;
    height: 23px;
    display: grid;
    place-items: center;
    background: #f2e0b0;
    border: 2px solid #8d9da4;
}
.tab-nav button:disabled {
    background: #dfe5ec;
    border-color: #b5b9be;
    opacity: 0.7;
}
.tab-nav svg {
    width: 17px;
    height: 17px;
}

/* taskbar, mostly below the fold */
.taskbar {
    height: 12px;
    flex: none;
    display: flex;
    justify-content: space-between;
    padding: 0 119px 0 749px;
    overflow: hidden;
    background: #404244;
}
.task {
    width: 70px;
    background: #68696b;
    border-right: 4px solid #555759;
}
.taskbar time {
    padding-top: 4px;
    font: 18px/20px "Open Sans", sans-serif;
    color: #fff;
}
```
